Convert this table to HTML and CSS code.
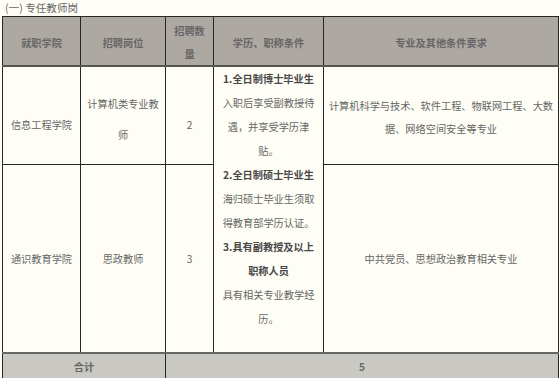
FILE: index.html
```html
<!DOCTYPE html>
<html lang="zh">
<head>
<meta charset="utf-8">
<link rel="stylesheet" href="styles.css">
</head>
<body>
<p class="title">(一) 专任教师岗</p>
<table class="jobs">
  <colgroup>
    <col class="c1"><col class="c2"><col class="c3"><col class="c4"><col class="c5">
  </colgroup>
  <thead>
    <tr class="head">
      <th>就职学院</th>
      <th>招聘岗位</th>
      <th>招聘数量</th>
      <th>学历、职称条件</th>
      <th>专业及其他条件要求</th>
    </tr>
  </thead>
  <tbody>
    <tr class="r1">
      <td class="low">信息工程学院</td>
      <td class="post">计算机类专业教师</td>
      <td class="low">2</td>
      <td class="cond" rowspan="2">
        <b>1.全日制博士毕业生</b><br>
        入职后享受副教授待<br>
        遇，并享受学历津<br>
        贴。<br>
        <b>2.全日制硕士毕业生</b><br>
        海归硕士毕业生须取<br>
        得教育部学历认证。<br>
        <b>3.具有副教授及以上</b><br>
        <b>职称人员</b><br>
        具有相关专业教学经<br>
        历。
      </td>
      <td class="major">计算机科学与技术、软件工程、物联网工程、大数据、网络空间安全等专业</td>
    </tr>
    <tr class="r2">
      <td>通识教育学院</td>
      <td>思政教师</td>
      <td>3</td>
      <td class="major">中共党员、思想政治教育相关专业</td>
    </tr>
    <tr class="total">
      <td colspan="2">合计</td>
      <td colspan="3">5</td>
    </tr>
  </tbody>
</table>
</body>
</html>
```

FILE: styles.css
```css
html, body {
  margin: 0;
  padding: 0;
  background: #fffef6;
}
body {
  padding: 0 2px;
  font-family: "Noto Sans CJK SC", sans-serif;
  font-size: 10.2px;
  color: #666;
}
.title {
  margin: 0;
  padding-left: 3px;
  height: 16px;
  line-height: 16px;
  font-size: 10.6px;
  color: #666;
}
.jobs {
  border-collapse: collapse;
  table-layout: fixed;
  width: 556px;
  background: #fffef6;
}
.c1 { width: 78px; }
.c2 { width: 85px; }
.c3 { width: 48px; }
.c4 { width: 110px; }
.c5 { width: 235px; }

.jobs th, .jobs td {
  border: 1px solid #262626;
  padding: 0 5px;
  text-align: center;
  vertical-align: middle;
  line-height: 24px;
}
.head th {
  background: #aea8a3;
  color: #666;
  font-weight: bold;
  height: 45px;
  line-height: 23px;
  padding-top: 2px;
  border-bottom: 2px solid #555;
}
.r1 td {
  height: 97px;
}
.r1 .low {
  height: 79px;
  padding-top: 18px;
}
.r1 .post {
  height: 90px;
  line-height: 31px;
  padding-top: 7px;
}
.jobs .major {
  padding-left: 2px;
  padding-right: 2px;
}
.r1 .major {
  height: 94px;
  line-height: 23px;
  padding-top: 3px;
}
.jobs .cond {
  vertical-align: top;
  padding-top: 0;
  line-height: 24px;
}
.cond b {
  color: #484848;
}
.r2 td {
  height: 187px;
}
.total td {
  background: #c9c8c2;
  border-top: 2px solid #666;
  height: 26px;
  font-weight: bold;
  color: #666;
}
```
